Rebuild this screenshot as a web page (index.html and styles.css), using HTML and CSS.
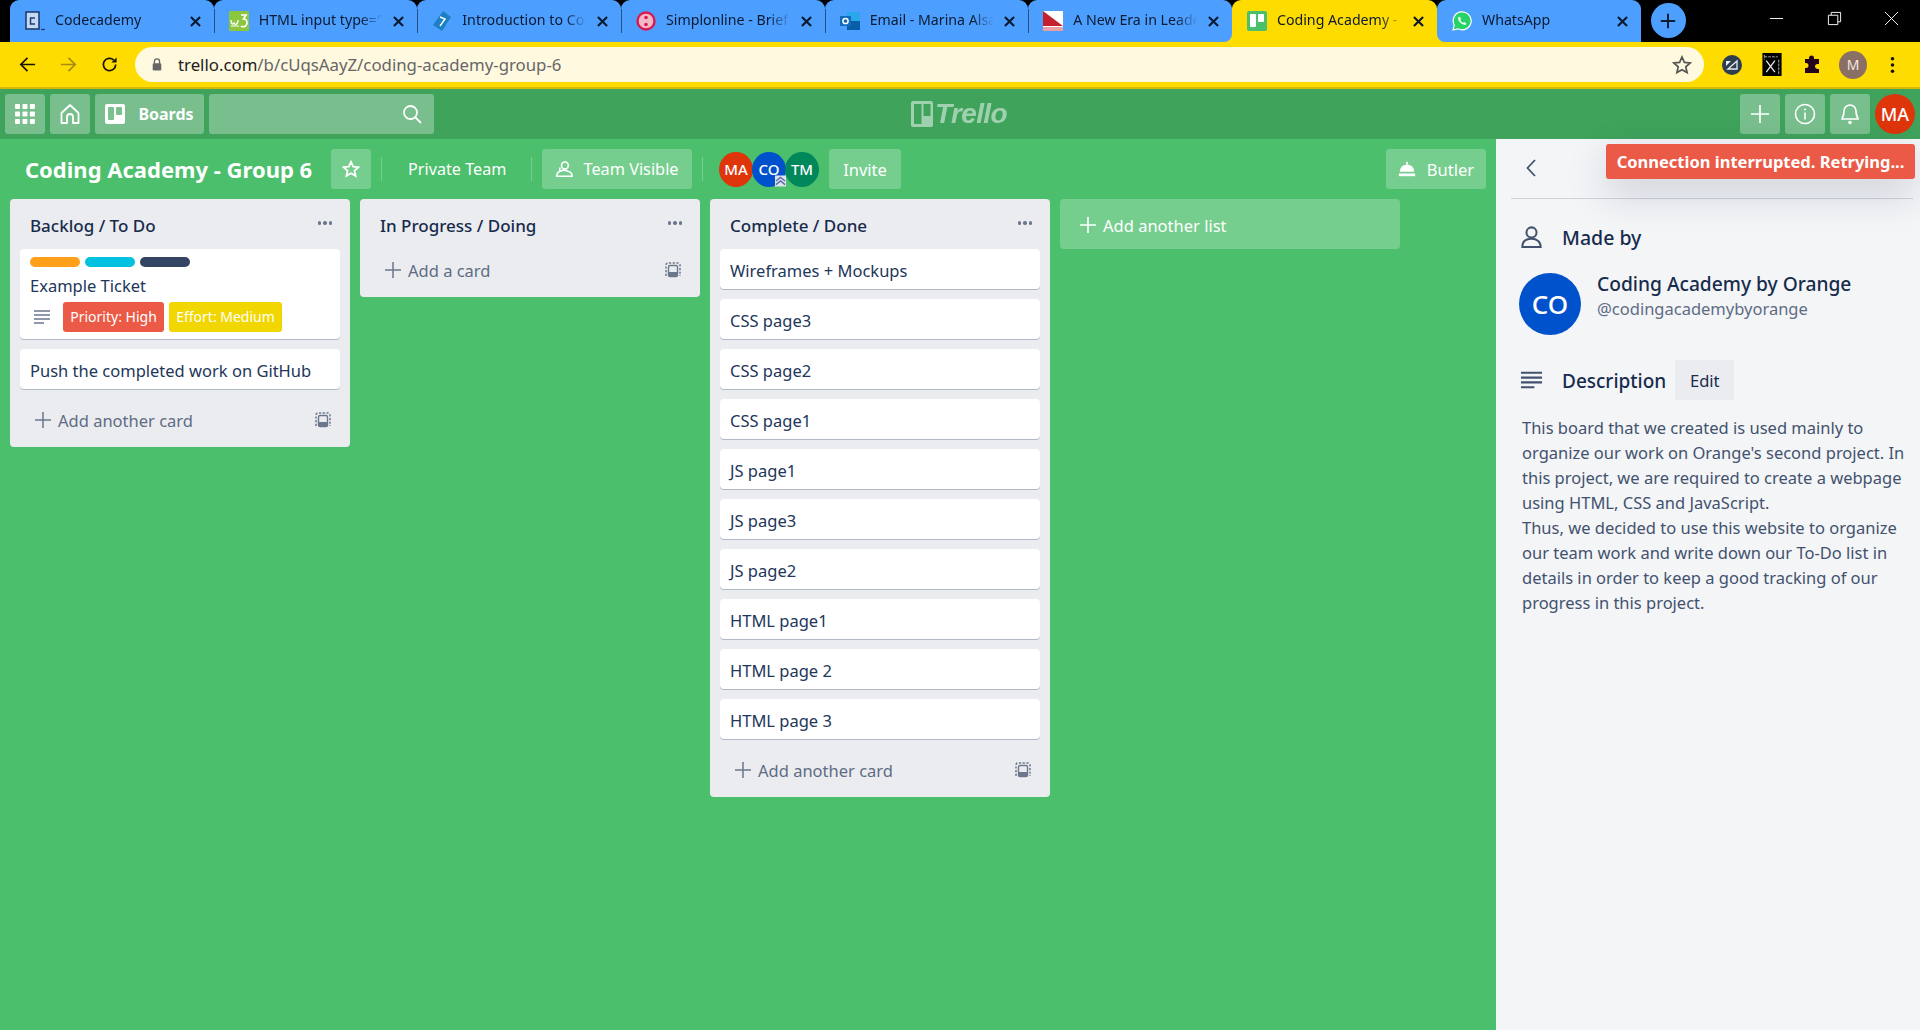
FILE: index.html
```html
<!DOCTYPE html>
<html lang="en">
<head>
<meta charset="utf-8">
<title>Coding Academy - Group 6 | Trello</title>
<link rel="stylesheet" href="styles.css">
</head>
<body>
<div class="tabstrip">
  <div class="tabs">
    <div class="tab"><svg class="fav" viewBox="0 0 20 20"><rect x="1" y="1" width="13" height="17" fill="#c5d9f2" stroke="#1d3f73" stroke-width="1.600"/><path d="M10 7H5.500v6H10" fill="none" stroke="#1d3f73" stroke-width="1.500"/><path d="M16 18.500h4" stroke="#1d3f73" stroke-width="1.300"/></svg><span class="tab-title">Codecademy</span><svg class="tab-x" viewBox="0 0 12 12"><path d="M1 1l10 10M11 1L1 11"/></svg></div>
    <div class="tab sep"><svg class="fav" viewBox="0 0 20 20"><rect width="20" height="20" rx="1" fill="#8cc63f"/><path d="M2 9c0 4 2 5 3 3 1 2 4 2 4-3" fill="none" stroke="#fff" stroke-width="1.300"/><path d="M2 15h8" stroke="#fff" stroke-width="1"/><path d="M12 4h5l-2.500 4c2.500 0 3.500 1.500 3.500 4s-3 5-6 3" fill="none" stroke="#fff" stroke-width="1.700"/></svg><span class="tab-title">HTML input type="</span><svg class="tab-x" viewBox="0 0 12 12"><path d="M1 1l10 10M11 1L1 11"/></svg></div>
    <div class="tab sep"><svg class="fav" viewBox="0 0 20 20"><path d="M11 0l8 6-9 14-9-6z" fill="#1d7fc4"/><path d="M8 6l5 2-5 7" fill="none" stroke="#fff" stroke-width="1.400"/></svg><span class="tab-title">Introduction to Codecademy</span><svg class="tab-x" viewBox="0 0 12 12"><path d="M1 1l10 10M11 1L1 11"/></svg></div>
    <div class="tab sep"><svg class="fav" viewBox="0 0 20 20"><circle cx="10" cy="10" r="8.500" fill="#f3b8c8" stroke="#d81b4f" stroke-width="2.400"/><circle cx="10" cy="6.500" r="1.800" fill="#d81b4f"/><circle cx="10" cy="13.500" r="1.800" fill="#d81b4f"/></svg><span class="tab-title">Simplonline - Brief</span><svg class="tab-x" viewBox="0 0 12 12"><path d="M1 1l10 10M11 1L1 11"/></svg></div>
    <div class="tab sep"><svg class="fav" viewBox="0 0 20 20"><rect x="7" y="1" width="13" height="18" fill="#28a8ea"/><path d="M7 10l13 0v9H7z" fill="#0a5ea8"/><rect y="5" width="11" height="10" fill="#0f6cbd"/><circle cx="5.500" cy="10" r="2.600" fill="none" stroke="#fff" stroke-width="1.500"/></svg><span class="tab-title">Email - Marina Alsaid</span><svg class="tab-x" viewBox="0 0 12 12"><path d="M1 1l10 10M11 1L1 11"/></svg></div>
    <div class="tab sep before-active"><svg class="fav" viewBox="0 0 20 20"><rect width="20" height="20" fill="#fff"/><path d="M0 0l20 15H0z" fill="#c5202e"/><rect y="16" width="20" height="4" fill="#e8a0a5"/></svg><span class="tab-title">A New Era in Leadership</span><svg class="tab-x" viewBox="0 0 12 12"><path d="M1 1l10 10M11 1L1 11"/></svg></div>
    <div class="tab active"><svg class="fav" viewBox="0 0 20 20"><rect width="20" height="20" rx="2" fill="#4bbf6b"/><rect x="3" y="3" width="6" height="13" rx="1" fill="#fff"/><rect x="11" y="3" width="6" height="8" rx="1" fill="#fff"/></svg><span class="tab-title">Coding Academy - Trello</span><svg class="tab-x" viewBox="0 0 12 12"><path d="M1 1l10 10M11 1L1 11"/></svg></div>
    <div class="tab after-active"><svg class="fav" viewBox="0 0 20 20"><path d="M1 19l1.300-4.800A9 9 0 1 1 6 17.800z" fill="#25d366" stroke="#fff" stroke-width="1.200"/><path d="M7 5.500c-2 2 0 5 1.500 6.300S12.500 15 14.500 13l-2-2-1.200.8c-1 0-2.800-1.800-3-3l.9-1.200z" fill="#fff"/></svg><span class="tab-title">WhatsApp</span><svg class="tab-x" viewBox="0 0 12 12"><path d="M1 1l10 10M11 1L1 11"/></svg></div>
  </div>
  <div class="newtab"><svg viewBox="0 0 20 20"><path d="M10 2v16M2 10h16" stroke="#0b1c33" stroke-width="2.200"/></svg></div>
  <div class="winctl">
    <svg viewBox="0 0 16 16"><path d="M1 8h14" stroke="#fff" stroke-width="1"/></svg>
    <svg viewBox="0 0 16 16"><path d="M1.500 4.500h10v10h-10zM4.500 4.500v-3h10v10h-3" fill="none" stroke="#fff" stroke-width="1"/></svg>
    <svg viewBox="0 0 16 16"><path d="M1 1l14 14M15 1L1 15" stroke="#fff" stroke-width="1"/></svg>
  </div>
</div>
<div class="toolbar">
  <svg class="nav-ico" viewBox="0 0 20 20"><path d="M18 10H3M10 3l-7 7 7 7" fill="none" stroke="#1b1400" stroke-width="1.800"/></svg>
  <svg class="nav-ico dim" viewBox="0 0 20 20"><path d="M2 10h15M10 3l7 7-7 7" fill="none" stroke="#a58a10" stroke-width="1.800"/></svg>
  <svg class="nav-ico" viewBox="0 0 20 20"><path d="M16.500 10a6.500 6.500 0 1 1-2-4.700" fill="none" stroke="#1b1400" stroke-width="1.800"/><path d="M17.500 2.500v5.500h-5.500z" fill="#1b1400"/></svg>
  <div class="omnibox">
    <svg class="lock" viewBox="0 0 14 16"><path d="M4 7V4.500a3 3 0 0 1 6 0V7" fill="none" stroke="#666" stroke-width="1.500"/><rect x="2" y="6.500" width="10" height="8.500" rx="1.500" fill="#666"/></svg>
    <span class="url"><b>trello.com</b>/b/cUqsAayZ/coding-academy-group-6</span>
    <svg class="star" viewBox="0 0 20 20"><path d="M10 2l2.400 5.400 5.800.6-4.400 3.900 1.300 5.700L10 14.700l-5.100 2.900 1.300-5.700L1.800 8l5.800-.6z" fill="none" stroke="#555" stroke-width="1.700"/></svg>
  </div>
  <div class="exts">
    <svg class="ext" viewBox="0 0 20 20"><circle cx="10" cy="10" r="10" fill="#2c3e50"/><path d="M6 14L15 6v8z" fill="none" stroke="#e8edf0" stroke-width="1.300"/><path d="M4 11V6h5z" fill="#e8edf0"/></svg>
    <svg class="ext tall" viewBox="0 0 20 24"><rect width="20" height="24" fill="#000"/><path d="M4 8l9 12M13 8L4 20" stroke="#eee" stroke-width="1.300"/><path d="M2 4h14M17 7v15M2 2v5" fill="none" stroke="#aaa" stroke-width="1" stroke-dasharray="3 1"/></svg>
    <svg class="ext" viewBox="0 0 20 20"><path d="M7 3a2.500 2.500 0 0 1 5 0v1h5v5h-1.500a2.500 2.500 0 0 0 0 5H17v4H3v-5h1a2.500 2.500 0 0 0 0-5H3V4h4z" fill="#22041c"/></svg>
    <span class="chrome-avatar">M</span>
    <svg class="dots" viewBox="0 0 4 20"><circle cx="2" cy="3" r="2" fill="#1b1400"/><circle cx="2" cy="10" r="2" fill="#1b1400"/><circle cx="2" cy="17" r="2" fill="#1b1400"/></svg>
  </div>
</div>
<header class="appbar">
  <div class="appbar-left">
    <div class="hbtn"><svg class="ico20" viewBox="0 0 18 18"><g fill="#fff"><rect x="0" y="0" width="4.500" height="4.500" rx=".7"/><rect x="6.700" y="0" width="4.500" height="4.500" rx=".7"/><rect x="13.400" y="0" width="4.500" height="4.500" rx=".7"/><rect x="0" y="6.700" width="4.500" height="4.500" rx=".7"/><rect x="6.700" y="6.700" width="4.500" height="4.500" rx=".7"/><rect x="13.400" y="6.700" width="4.500" height="4.500" rx=".7"/><rect x="0" y="13.400" width="4.500" height="4.500" rx=".7"/><rect x="6.700" y="13.400" width="4.500" height="4.500" rx=".7"/><rect x="13.400" y="13.400" width="4.500" height="4.500" rx=".7"/></g></svg></div>
    <div class="hbtn"><svg class="ico22" viewBox="0 0 22 22"><path d="M11 2L2.500 10v10h5.500v-6a3 3 0 0 1 6 0v6h5.500V10z" fill="none" stroke="#fff" stroke-width="1.800" stroke-linejoin="round"/></svg></div>
    <div class="hbtn boards"><svg class="ico20" viewBox="0 0 20 20"><rect width="20" height="20" rx="2" fill="#fff"/><rect x="3" y="3" width="6" height="13" rx="1" fill="#7dc090"/><rect x="11" y="3" width="6" height="8" rx="1" fill="#7dc090"/></svg><span>Boards</span></div>
    <div class="search"><svg class="ico20" viewBox="0 0 20 20"><circle cx="8.500" cy="8.500" r="6.500" fill="none" stroke="#fff" stroke-width="1.800"/><path d="M13.500 13.500L19 19" stroke="#fff" stroke-width="1.800"/></svg></div>
  </div>
  <div class="logo"><svg class="logo-mark" viewBox="0 0 22 26"><rect width="22" height="26" rx="2" fill="#fff"/><rect x="3" y="3" width="7.500" height="20" fill="#3fa35c"/><rect x="12.500" y="3" width="7" height="12" fill="#3fa35c"/></svg><span class="logo-text">Trello</span></div>
  <div class="appbar-right">
    <div class="hbtn"><svg class="ico20" viewBox="0 0 20 20"><path d="M10 1v18M1 10h18" stroke="#fff" stroke-width="1.700"/></svg></div>
    <div class="hbtn"><svg class="ico22" viewBox="0 0 22 22"><circle cx="11" cy="11" r="9.500" fill="none" stroke="#fff" stroke-width="1.600"/><path d="M11 9.500v7" stroke="#fff" stroke-width="1.600"/><circle cx="11" cy="6.500" r="1.100" fill="#fff"/></svg></div>
    <div class="hbtn"><svg class="ico22" viewBox="0 0 22 22"><path d="M11 2a6 6 0 0 0-6 6c0 5-2 7-2 8h16c0-1-2-3-2-8a6 6 0 0 0-6-6z" fill="none" stroke="#fff" stroke-width="1.700"/><circle cx="11" cy="19.500" r="1.800" fill="#fff"/></svg></div>
    <div class="me">MA</div>
  </div>
</header>
<main class="workspace">
  <section class="board">
    <div class="board-head">
      <h1 class="board-title">Coding Academy - Group 6</h1>
      <div class="bbtn star-btn"><svg class="ico18" viewBox="0 0 20 20"><path d="M10 2l2.400 5.400 5.800.6-4.400 3.900 1.300 5.700L10 14.700l-5.100 2.900 1.300-5.700L1.800 8l5.800-.6z" fill="none" stroke="#fff" stroke-width="2"/></svg></div>
      <i class="bsep"></i>
      <div class="plain-btn">Private Team</div>
      <i class="bsep"></i>
      <div class="bbtn team"><svg class="ico18" viewBox="0 0 20 20"><circle cx="11" cy="6" r="3.800" fill="none" stroke="#fff" stroke-width="1.800"/><path d="M2 18c0-3 1.500-5 4-5.500 3-1.500 6-1.500 8 0 3 .5 5 2.500 5 5.500z" fill="none" stroke="#fff" stroke-width="1.800"/><path d="M6 12.500c-1-1-1-3 0-4" fill="none" stroke="#fff" stroke-width="1.800"/></svg><span>Team Visible</span></div>
      <i class="bsep"></i>
      <div class="avatars">
        <div class="av av-ma">MA</div>
        <div class="av av-co">CO<svg class="admin" viewBox="0 0 12 12"><rect width="12" height="12" fill="#dfe4ee"/><path d="M1 6l5-4 5 4M1 10l5-4 5 4" fill="none" stroke="#5a6fa8" stroke-width="1.600"/></svg></div>
        <div class="av av-tm">TM</div>
      </div>
      <div class="bbtn invite">Invite</div>
      <div class="bbtn butler"><svg class="ico18" viewBox="0 0 20 20"><path d="M2 13a8 8 0 0 1 16 0z" fill="#fff"/><rect x="9" y="2" width="2" height="3" fill="#fff"/><rect x="1" y="15" width="18" height="3" fill="#fff"/></svg><span>Butler</span></div>
    </div>
    <div class="lists">
      <div class="list">
        <div class="list-head"><h2>Backlog / To Do</h2><span class="more"><i></i><i></i><i></i></span></div>
        <div class="card rich">
          <div class="labels"><i class="lab orange"></i><i class="lab sky"></i><i class="lab navy"></i></div>
          <div class="card-title">Example Ticket</div>
          <div class="badges"><svg class="desc-mini" viewBox="0 0 16 14"><path d="M0 1h16M0 5h16M0 9h16M0 13h10" stroke="#6b778c" stroke-width="1.700"/></svg><span class="badge red">Priority: High</span><span class="badge yellow">Effort: Medium</span></div>
        </div>
        <div class="card">Push the completed work on GitHub</div>
        <div class="add-card"><svg class="plus" viewBox="0 0 16 16"><path d="M8 0v16M0 8h16" stroke="#6b778c" stroke-width="1.500"/></svg><span>Add another card</span><svg class="tpl" viewBox="0 0 16 16"><path d="M1 14V3a2 2 0 0 1 2-2h10a2 2 0 0 1 2 2v11" fill="none" stroke="#6b778c" stroke-width="1.500" stroke-dasharray="2.200 1.500"/><rect x="3.500" y="3.500" width="9" height="11" rx="1.500" fill="none" stroke="#6b778c" stroke-width="1.400"/><rect x="3.500" y="10" width="9" height="4.500" rx="1" fill="#6b778c"/></svg></div>
      </div>
      <div class="list">
        <div class="list-head"><h2>In Progress / Doing</h2><span class="more"><i></i><i></i><i></i></span></div>
        <div class="add-card"><svg class="plus" viewBox="0 0 16 16"><path d="M8 0v16M0 8h16" stroke="#6b778c" stroke-width="1.500"/></svg><span>Add a card</span><svg class="tpl" viewBox="0 0 16 16"><path d="M1 14V3a2 2 0 0 1 2-2h10a2 2 0 0 1 2 2v11" fill="none" stroke="#6b778c" stroke-width="1.500" stroke-dasharray="2.200 1.500"/><rect x="3.500" y="3.500" width="9" height="11" rx="1.500" fill="none" stroke="#6b778c" stroke-width="1.400"/><rect x="3.500" y="10" width="9" height="4.500" rx="1" fill="#6b778c"/></svg></div>
      </div>
      <div class="list">
        <div class="list-head"><h2>Complete / Done</h2><span class="more"><i></i><i></i><i></i></span></div>
        <div class="card">Wireframes + Mockups</div>
        <div class="card">CSS page3</div>
        <div class="card">CSS page2</div>
        <div class="card">CSS page1</div>
        <div class="card">JS page1</div>
        <div class="card">JS page3</div>
        <div class="card">JS page2</div>
        <div class="card">HTML page1</div>
        <div class="card">HTML page 2</div>
        <div class="card">HTML page 3</div>
        <div class="add-card"><svg class="plus" viewBox="0 0 16 16"><path d="M8 0v16M0 8h16" stroke="#6b778c" stroke-width="1.500"/></svg><span>Add another card</span><svg class="tpl" viewBox="0 0 16 16"><path d="M1 14V3a2 2 0 0 1 2-2h10a2 2 0 0 1 2 2v11" fill="none" stroke="#6b778c" stroke-width="1.500" stroke-dasharray="2.200 1.500"/><rect x="3.500" y="3.500" width="9" height="11" rx="1.500" fill="none" stroke="#6b778c" stroke-width="1.400"/><rect x="3.500" y="10" width="9" height="4.500" rx="1" fill="#6b778c"/></svg></div>
      </div>
      <div class="add-list"><svg class="plus" viewBox="0 0 16 16"><path d="M8 0v16M0 8h16" stroke="#fff" stroke-width="1.700"/></svg><span>Add another list</span></div>
    </div>
  </section>
  <aside class="panel">
    <div class="toast">Connection interrupted. Retrying...</div>
    <div class="panel-head"><svg class="chev" viewBox="0 0 10 18"><path d="M9 1L1.500 9 9 17" fill="none" stroke="#42526e" stroke-width="1.800"/></svg></div>
    <div class="panel-row madeby"><svg class="row-ico" viewBox="0 0 24 24"><circle cx="12" cy="7" r="5.500" fill="none" stroke="#42526e" stroke-width="2.200"/><path d="M2 23c0-6 4-9 10-9s10 3 10 9z" fill="none" stroke="#42526e" stroke-width="2.200"/></svg><h3>Made by</h3></div>
    <div class="member"><div class="member-av">CO</div><div class="member-info"><div class="member-name">Coding Academy by Orange</div><div class="member-handle">@codingacademybyorange</div></div></div>
    <div class="panel-row descr"><svg class="row-ico" viewBox="0 0 24 18"><path d="M1 1.500h22M1 6.500h22M1 11.500h22M1 16.500h14" stroke="#42526e" stroke-width="2.200"/></svg><h3>Description</h3><div class="edit">Edit</div></div>
    <div class="desc-text">This board that we created is used mainly to organize our work on Orange's second project. In this project, we are required to create a webpage using HTML, CSS and JavaScript.<br>Thus, we decided to use this website to organize our team work and write down our To-Do list in details in order to keep a good tracking of our progress in this project.</div>
  </aside>
</main>
</body>
</html>
```
FILE: styles.css
```css
* { box-sizing: border-box; }
html, body { margin: 0; height: 100%; }
body { width: 1920px; height: 1030px; overflow: hidden; display: flex; flex-direction: column; font-family: "Noto Sans", "Open Sans", sans-serif; color: #172b4d; background: #4bbf6b; }
h1, h2, h3 { margin: 0; }

/* browser chrome */
.tabstrip { height: 42px; background: #000; display: flex; flex: none; padding-left: 10px; }
.tabs { display: flex; }
.tab { position: relative; width: 203.670px; height: 42px; background: #4d9fff; display: flex; align-items: center; padding: 0 13px 0 15px; border-radius: 9px 9px 0 0; }
.tab.sep::before { content: ""; position: absolute; left: 0; top: 9px; height: 24px; width: 1px; background: #26507f; }
.fav { width: 20px; height: 20px; flex: none; margin-right: 10px; }
.tab-title { flex: 1; min-width: 0; font-size: 14.200px; line-height: 20px; margin-top: -2px; color: #0b1a30; white-space: nowrap; overflow: hidden; -webkit-mask-image: linear-gradient(90deg, #000 82%, transparent 100%); mask-image: linear-gradient(90deg, #000 82%, transparent 100%); }
.tab-x { width: 11px; height: 11px; flex: none; margin-left: 10px; margin-top: 1px; stroke: #0b1a30; stroke-width: 2.300; fill: none; }
.tab.active { background: #ffdc00; width: 205px; }
.tab.active::before, .tab.active::after { content: ""; position: absolute; bottom: 0; width: 10px; height: 10px; background: #ffdc00; }
.tab.active::before { left: -10px; }
.tab.active::after { right: -10px; }
.before-active { border-bottom-right-radius: 8px; z-index: 1; }
.after-active { border-bottom-left-radius: 8px; z-index: 1; width: 204px; }
.newtab { width: 35px; height: 35px; margin: 3px 0 0 10px; border-radius: 50%; background: #4d9fff; display: flex; align-items: center; justify-content: center; }
.newtab svg { width: 18px; height: 18px; }
.winctl { margin-left: auto; width: 234px; padding: 0 21px 6px 83px; display: flex; align-items: center; justify-content: space-between; }
.winctl svg { width: 15px; height: 15px; }

.toolbar { height: 47px; flex: none; background: #ffdc00; border-bottom: 2px solid #d9b800; display: flex; align-items: flex-start; padding: 5px 0 0 18px; }
.nav-ico { width: 19px; height: 19px; margin-top: 8px; margin-right: 22px; flex: none; }
.omnibox { width: 1569px; height: 35px; margin-left: -6px; border-radius: 18px; background: #fff9e0; display: flex; align-items: center; padding: 0 12px 0 16px; }
.lock { width: 12px; height: 15px; flex: none; margin-right: 15px; }
.url { flex: 1; font-size: 16.800px; color: #666; white-space: nowrap; }
.url b { font-weight: 400; color: #222; }
.star { width: 20px; height: 20px; }
.exts { display: flex; align-items: center; height: 35px; padding-left: 18px; }
.ext { width: 20px; height: 20px; margin-right: 20px; flex: none; }
.ext.tall { height: 23px; }
.chrome-avatar { width: 28px; height: 28px; margin-left: -3px; border-radius: 50%; background: #8a6f65; color: #f1e6e0; font-size: 14px; display: flex; align-items: center; justify-content: center; }
.dots { width: 5px; height: 18px; margin-left: 23px; }

/* trello header */
.appbar { height: 50px; flex: none; background: #3fa35c; display: grid; grid-template-columns: 1fr auto 1fr; align-items: center; padding: 0 5px; }
.appbar-left, .appbar-right { display: flex; gap: 5px; align-items: center; }
.appbar-right { justify-content: flex-end; }
.hbtn { height: 40px; width: 40px; border-radius: 3px; background: rgba(255,255,255,.3); display: flex; align-items: center; justify-content: center; }
.hbtn.boards { width: 109px; gap: 13px; color: #fff; font-weight: 700; font-size: 16px; }
.search { width: 225px; height: 40px; border-radius: 3px; background: rgba(255,255,255,.3); display: flex; align-items: center; justify-content: flex-end; padding-right: 12px; }
.ico20 { width: 20px; height: 20px; flex: none; }
.ico22 { width: 22px; height: 22px; flex: none; }
.ico18 { width: 18px; height: 18px; flex: none; }
.logo { display: flex; align-items: center; gap: 2px; opacity: .5; height: 26px; margin-left: -2px; }
.logo-mark { width: 22px; height: 26px; }
.logo-text { font-family: "Liberation Sans", sans-serif; font-style: italic; font-weight: 700; font-size: 28px; line-height: 26px; color: #fff; letter-spacing: -.6px; }
.me { width: 40px; height: 40px; border-radius: 50%; background: #de350b; color: #fff; font-size: 18px; font-weight: 500; display: flex; align-items: center; justify-content: center; }

/* board */
.workspace { flex: 1; display: flex; min-height: 0; }
.board { width: 1496px; flex: none; }
.board-head { height: 60px; display: flex; align-items: center; padding: 0 10px 0 25px; }
.board-title { font-size: 22px; font-weight: 700; color: #fff; width: 287px; white-space: nowrap; margin-right: 19px; }
.bbtn { height: 40px; border-radius: 3px; background: rgba(255,255,255,.24); color: #fff; font-size: 16.500px; display: flex; align-items: center; justify-content: center; }
.star-btn { width: 40px; }
.bsep { width: 1px; height: 24px; background: rgba(255,255,255,.24); margin: 0 10px; flex: none; }
.plain-btn { color: #fff; font-size: 16.200px; width: 129px; padding-left: 16px; }
.team { width: 150px; gap: 10px; font-size: 16.300px; }
.avatars { display: flex; margin-left: 6px; }
.av { position: relative; width: 34px; height: 35px; border-radius: 50%; color: #fff; font-size: 15px; font-weight: 500; display: flex; align-items: center; justify-content: center; margin-right: -1px; }
.av-ma { background: #de350b; }
.av-co { background: #0052cc; }
.av-tm { background: #00875a; }
.admin { position: absolute; right: 0; bottom: 0; width: 11px; height: 12px; }
.invite { width: 72px; margin-left: 11px; }
.butler { width: 100px; margin-left: auto; gap: 11px; }

.lists { display: flex; align-items: flex-start; gap: 10px; padding: 0 10px; }
.list { width: 340px; flex: none; background: #ebecf0; border-radius: 4px; padding: 0 10px; }
.list-head { height: 50px; display: flex; align-items: center; justify-content: space-between; padding: 2px 8px 0 10px; }
.list-head h2 { font-size: 17px; font-weight: 500; color: #172b4d; }
.more { display: flex; gap: 2px; margin-top: -4px; }
.more i { width: 3.500px; height: 3.500px; border-radius: 50%; background: #6b778c; }
.card { background: #fff; border-radius: 4px; box-shadow: 0 1px 0 rgba(9,30,66,.25); min-height: 40px; margin-bottom: 10px; padding: 2px 10px 0; display: flex; align-items: center; font-size: 16.500px; color: #22365a; white-space: nowrap; }
.card.rich { display: block; height: 90px; padding-top: 8px; }
.labels { display: flex; gap: 5px; height: 10px; }
.lab { width: 50px; height: 10px; border-radius: 5px; }
.orange { background: #ff9f1a; }
.sky { background: #00c2e0; }
.navy { background: #344563; }
.card-title { height: 24px; line-height: 24px; margin-top: 7px; }
.badges { display: flex; align-items: center; gap: 5px; margin-top: 4px; }
.desc-mini { width: 16px; height: 14px; margin: 0 8px 0 4px; }
.badge { height: 30px; padding-bottom: 2px; border-radius: 3px; color: #fff; font-size: 14px; display: flex; align-items: center; justify-content: center; }
.badge.red { width: 101px; background: #eb5a46; }
.badge.yellow { width: 113px; background: #f2d600; }
.add-card { height: 48px; display: flex; align-items: center; padding: 0 9px 6px 15px; font-size: 16.500px; color: #5e6c84; }
.plus { width: 16px; height: 16px; margin-right: 7px; flex: none; }
.tpl { width: 16px; height: 16px; margin-left: auto; }
.add-list { width: 340px; height: 50px; padding: 2px 0 0 20px; background: rgba(255,255,255,.24); border-radius: 4px; color: #fff; font-size: 16.500px; display: flex; align-items: center; }

/* side panel */
.panel { position: relative; flex: 1; background: #f4f5f7; padding: 0 7px 0 15px; }
.toast { position: absolute; top: 5px; right: 5px; width: 309px; height: 35px; border-radius: 3px; background: #eb5a46; color: #fff; font-weight: 700; font-size: 16.500px; display: flex; align-items: center; justify-content: center; white-space: nowrap; box-shadow: 0 14px 40px rgba(9,30,66,.18); }
.panel-head { height: 60px; padding: 0 0 2px 15px; border-bottom: 1px solid #cfd3da; display: flex; align-items: center; }
.chev { width: 10px; height: 18px; }
.panel-row { display: flex; align-items: center; padding-left: 9px; }
.row-ico { width: 23px; height: 22px; flex: none; margin-right: 19px; }
.panel-row h3 { font-size: 19px; font-weight: 500; color: #172b4d; }
.descr h3 { padding-top: 2px; }
.madeby { height: 40px; margin-top: 18px; }
.madeby h3 { font-size: 19.500px; }
.member { display: flex; margin-top: 16px; padding-left: 8px; }
.member-av { width: 62px; height: 62px; border-radius: 50%; background: #0052cc; color: #fff; font-size: 26px; font-weight: 500; display: flex; align-items: center; justify-content: center; margin-right: 16px; }
.member-info { margin-top: -1px; }
.member-name { font-size: 19.200px; font-weight: 500; line-height: 24px; color: #172b4d; }
.member-handle { font-size: 16.500px; line-height: 22px; color: #5e6c84; margin-top: 2px; }
.descr { height: 40px; margin-top: 25px; }
.edit { width: 59px; height: 40px; margin-left: 9px; border-radius: 3px; background: #ebecf0; font-size: 16.500px; display: flex; align-items: center; justify-content: center; color: #172b4d; }
.desc-text { margin-top: 15px; padding-left: 11px; width: 402px; font-size: 16.500px; line-height: 25px; color: #42526e; }
```
